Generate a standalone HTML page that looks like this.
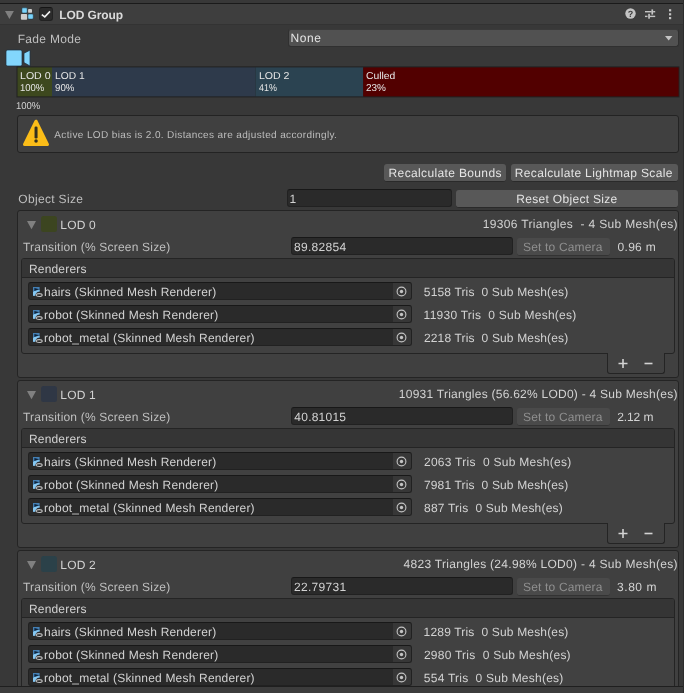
<!DOCTYPE html>
<html><head><meta charset="utf-8"><title>LOD Group</title>
<style>
html,body{margin:0;padding:0;background:#383838;}
body{width:684px;height:693px;overflow:hidden;position:relative;font-family:"Liberation Sans",sans-serif;}
#w{position:absolute;left:0;top:0;width:684px;height:693px;overflow:hidden;will-change:transform;text-rendering:geometricPrecision;}
.t{position:absolute;white-space:pre;line-height:16px;}
.b{position:absolute;box-sizing:border-box;}
svg{position:absolute;overflow:visible;}
</style></head><body><div id="w">

<div class="b" style="left:0px;top:3px;width:684px;height:1px;background:#1a1a1a;"></div>
<div class="b" style="left:0px;top:4px;width:684px;height:20px;background:#3e3e3e;"></div>
<div class="b" style="left:0px;top:24px;width:684px;height:1px;background:#333333;"></div>
<svg style="left:5px;top:10.9px" width="10" height="9"><polygon points="0,0 8.9,0 4.4,8.1" fill="#808080"/></svg>
<svg style="left:20px;top:7px" width="14" height="14"><rect x="1.9" y="0.85" width="5.3" height="5.15" rx="1" fill="#7ad3fa" stroke="#1d3444" stroke-width="0.5"/><rect x="8.1" y="1.9" width="3.9" height="3.9" rx="0.9" fill="#cdcdcd"/><rect x="0.9" y="7" width="6.3" height="5.8" rx="1" fill="#cdcdcd"/><rect x="7.95" y="7" width="5.3" height="5.1" rx="1" fill="#7ad3fa" stroke="#1d3444" stroke-width="0.5"/></svg>
<div class="b" style="left:39px;top:7px;width:14px;height:14px;background:#2b2b2b;border:1px solid #222;border-top-color:#151515;border-radius:3px;"></div>
<svg style="left:36px;top:2px" width="20" height="20"><polyline points="5.8,12.6 8.8,14.9 14,9.4" fill="none" stroke="#efefef" stroke-width="1.6"/></svg>
<div class="t" style="left:59.36px;top:7px;font-size:12px;color:#dadada;letter-spacing:-0.13px;font-weight:bold;">LOD Group</div>
<svg style="left:624.5px;top:8.3px" width="11" height="11"><circle cx="5.5" cy="5.5" r="5.2" fill="#c4c4c4"/><text x="5.5" y="8.8" font-size="9" font-weight="bold" text-anchor="middle" fill="#3e3e3e" font-family="Liberation Sans, sans-serif">?</text></svg>
<svg style="left:645px;top:9px" width="11" height="10"><g fill="#c4c4c4"><rect x="0" y="2" width="6.6" height="1.4"/><rect x="6.4" y="0.4" width="1.7" height="5.2"/><rect x="8.1" y="2" width="2.1" height="1.4"/><rect x="0" y="6.7" width="2.5" height="1.4"/><rect x="3.2" y="4.8" width="1.7" height="4.9"/><rect x="4.9" y="6.7" width="5.3" height="1.4"/></g></svg>
<svg style="left:669px;top:9px" width="3" height="11"><g fill="#c4c4c4"><rect x="0" y="0.2" width="2.2" height="2.2"/><rect x="0" y="4.2" width="2.2" height="2.2"/><rect x="0" y="8" width="2.2" height="2.2"/></g></svg>
<div class="t" style="left:17.70px;top:31px;font-size:12px;color:#bfbfbf;letter-spacing:0.325px;">Fade Mode</div>
<div class="b" style="left:288px;top:29px;width:391px;height:18px;background:#515151;border:1px solid #303030;border-top-color:#3a3a3a;border-radius:3px;"></div>
<div class="t" style="left:290.50px;top:30px;font-size:12px;color:#e4e4e4;letter-spacing:0.599px;">None</div>
<svg style="left:665.4px;top:36px" width="8" height="5"><polygon points="0,0 7.4,0 3.7,4.5" fill="#c4c4c4"/></svg>
<svg style="left:6px;top:50px" width="25" height="16"><rect x="0" y="0" width="16" height="16" rx="1.7" fill="#82d6fc" stroke="#1e3242" stroke-width="0.7"/><polygon points="18,3.2 24,0.2 24,16 18,12.6" fill="#82d6fc" stroke="#1e3242" stroke-width="0.7"/></svg>
<svg style="left:0;top:0" width="684" height="110"><rect x="16.5" y="66.4" width="663" height="31" fill="#212121"/><rect x="17.5" y="67.4" width="34.5" height="29" fill="#3d481e"/><rect x="52" y="67.4" width="203.5" height="29" fill="#2e3a4b"/><rect x="255.5" y="67.4" width="107.7" height="29" fill="#2b4351"/><rect x="363.2" y="67.4" width="315.4" height="29" fill="#520000"/></svg>
<div class="t" style="left:20.00px;top:69px;font-size:10px;color:#e6e6e6;transform:scaleX(1.0585);transform-origin:0 0;">LOD 0</div>
<div class="t" style="left:20.13px;top:81px;font-size:10px;color:#e6e6e6;transform:scaleX(0.9492);transform-origin:0 0;">100%</div>
<div class="t" style="left:54.92px;top:69px;font-size:10px;color:#e6e6e6;transform:scaleX(1.0241);transform-origin:0 0;">LOD 1</div>
<div class="t" style="left:55.28px;top:81px;font-size:10px;color:#e6e6e6;transform:scaleX(0.9673);transform-origin:0 0;">90%</div>
<div class="t" style="left:258.70px;top:69px;font-size:10px;color:#e6e6e6;transform:scaleX(1.055);transform-origin:0 0;">LOD 2</div>
<div class="t" style="left:259.33px;top:81px;font-size:10px;color:#e6e6e6;transform:scaleX(0.8937);transform-origin:0 0;">41%</div>
<div class="t" style="left:365.93px;top:69px;font-size:10px;color:#e6e6e6;transform:scaleX(1.0358);transform-origin:0 0;">Culled</div>
<div class="t" style="left:365.95px;top:81px;font-size:10px;color:#e6e6e6;transform:scaleX(0.9995);transform-origin:0 0;">23%</div>
<div class="t" style="left:16.33px;top:99px;font-size:10px;color:#d2d2d2;transform:scaleX(0.9492);transform-origin:0 0;">100%</div>
<div class="b" style="left:17px;top:115px;width:662px;height:38px;background:#404040;border:1px solid #232323;border-radius:3px;"></div>
<svg style="left:22px;top:118px" width="28" height="29"><path d="M14 3.4 L25.3 26.4 H2.7 Z" fill="#fbbd18" stroke="#fbbd18" stroke-width="3.4" stroke-linejoin="round"/><rect x="12.55" y="8.4" width="3" height="12.2" rx="1.4" fill="#33301f"/><circle cx="14.05" cy="23" r="1.75" fill="#33301f"/></svg>
<div class="t" style="left:54.27px;top:128px;font-size:10px;color:#bdbdbd;letter-spacing:0.372px;">Active LOD bias is 2.0. Distances are adjusted accordingly.</div>
<div class="b" style="left:384px;top:164px;width:122.4px;height:18px;background:#585858;border-bottom:1px solid #2a2a2a;border-radius:3px;"></div>
<div class="t" style="left:388.60px;top:165px;font-size:12px;color:#e4e4e4;letter-spacing:0.358px;">Recalculate Bounds</div>
<div class="b" style="left:511.3px;top:164px;width:167px;height:18px;background:#585858;border-bottom:1px solid #2a2a2a;border-radius:3px;"></div>
<div class="t" style="left:514.80px;top:165px;font-size:12px;color:#e4e4e4;letter-spacing:0.356px;">Recalculate Lightmap Scale</div>
<div class="t" style="left:18.22px;top:191px;font-size:12px;color:#bfbfbf;letter-spacing:0.334px;">Object Size</div>
<div class="b" style="left:287px;top:189px;width:165px;height:18px;background:#2a2a2a;border:1px solid #212121;border-top-color:#181818;border-radius:3px;"></div>
<div class="t" style="left:289.42px;top:191px;font-size:12px;color:#d2d2d2;">1</div>
<div class="b" style="left:456px;top:190px;width:222.3px;height:18px;background:#585858;border-bottom:1px solid #2a2a2a;border-radius:3px;"></div>
<div class="t" style="left:516.30px;top:191px;font-size:12px;color:#e4e4e4;letter-spacing:0.306px;">Reset Object Size</div>
<div class="b" style="left:17px;top:210px;width:662px;height:168px;background:#404040;border:1px solid #242424;border-radius:3px;"></div>
<svg style="left:27px;top:221px" width="10" height="9"><polygon points="0,0 9,0 4.5,8.2" fill="#808080"/></svg>
<div class="b" style="left:41px;top:216px;width:16px;height:16px;background:#3c4520;border-radius:2.5px;"></div>
<div class="t" style="left:60.30px;top:217px;font-size:12px;color:#d2d2d2;letter-spacing:0.173px;">LOD 0</div>
<div class="t" style="left:482.87px;top:216px;font-size:12px;color:#d2d2d2;letter-spacing:0.33px;">19306 Triangles  - 4 Sub Mesh(es)</div>
<div class="t" style="left:23.02px;top:239px;font-size:12px;color:#bfbfbf;letter-spacing:0.198px;">Transition (% Screen Size)</div>
<div class="b" style="left:291px;top:237px;width:222px;height:18px;background:#2a2a2a;border:1px solid #212121;border-top-color:#181818;border-radius:3px;"></div>
<div class="t" style="left:294.03px;top:239px;font-size:12px;color:#d2d2d2;letter-spacing:0.286px;">89.82854</div>
<div class="b" style="left:517px;top:238px;width:93px;height:18px;background:#4a4a4a;border-bottom:1px solid #333;border-radius:3px;"></div>
<div class="t" style="left:522.99px;top:239px;font-size:12px;color:#8f8f8f;letter-spacing:0.175px;">Set to Camera</div>
<div class="t" style="left:617.60px;top:239px;font-size:12px;color:#d2d2d2;letter-spacing:0.281px;">0.96 m</div>
<div class="b" style="left:21px;top:258px;width:654px;height:96px;background:#414141;border:1px solid #242424;border-radius:3px;"></div>
<div class="b" style="left:22px;top:259px;width:652px;height:18px;background:#353535;border-radius:2px 2px 0 0;"></div>
<div class="b" style="left:22px;top:277px;width:652px;height:1px;background:#242424;"></div>
<div class="t" style="left:28.90px;top:261px;font-size:12px;color:#d2d2d2;letter-spacing:0.199px;">Renderers</div>
<div class="b" style="left:28px;top:282px;width:384px;height:18px;background:#2a2a2a;border:1px solid #212121;border-top-color:#181818;border-radius:3px;"></div>
<div class="b" style="left:393px;top:283px;width:18px;height:16px;background:#373737;border-radius:0 2px 2px 0;"></div>
<svg style="left:396px;top:285.5px" width="11" height="11"><circle cx="5.5" cy="5.5" r="4.4" fill="none" stroke="#c4c4c4" stroke-width="1.1"/><circle cx="5.5" cy="5.5" r="1.7" fill="#c4c4c4"/></svg>
<svg style="left:32.6px;top:287.2px" width="10" height="10"><path d="M0 0 H6.6 V4.4 C4 4.5 2.3 6 2.1 8.8 H0 Z" fill="#447fb3"/><path d="M0 8.8 V5 C1.2 3.6 3.4 2.9 6.6 2.9 V4.4 C4 4.5 2.3 6 2.1 8.8 Z" fill="#86c8f2"/><path d="M1.4 0.9 L6.1 2.2 L1.4 3.9 Z" fill="#0e2238"/><ellipse cx="6.15" cy="8.1" rx="3.05" ry="1.45" fill="#262626" stroke="#bcbcbc" stroke-width="1.1"/></svg>
<div class="t" style="left:44.03px;top:284px;font-size:12px;color:#d2d2d2;letter-spacing:0.195px;">hairs (Skinned Mesh Renderer)</div>
<div class="t" style="left:423.86px;top:284px;font-size:12px;color:#d2d2d2;letter-spacing:0.152px;">5158 Tris  0 Sub Mesh(es)</div>
<div class="b" style="left:28px;top:305px;width:384px;height:18px;background:#2a2a2a;border:1px solid #212121;border-top-color:#181818;border-radius:3px;"></div>
<div class="b" style="left:393px;top:306px;width:18px;height:16px;background:#373737;border-radius:0 2px 2px 0;"></div>
<svg style="left:396px;top:308.5px" width="11" height="11"><circle cx="5.5" cy="5.5" r="4.4" fill="none" stroke="#c4c4c4" stroke-width="1.1"/><circle cx="5.5" cy="5.5" r="1.7" fill="#c4c4c4"/></svg>
<svg style="left:32.6px;top:310.2px" width="10" height="10"><path d="M0 0 H6.6 V4.4 C4 4.5 2.3 6 2.1 8.8 H0 Z" fill="#447fb3"/><path d="M0 8.8 V5 C1.2 3.6 3.4 2.9 6.6 2.9 V4.4 C4 4.5 2.3 6 2.1 8.8 Z" fill="#86c8f2"/><path d="M1.4 0.9 L6.1 2.2 L1.4 3.9 Z" fill="#0e2238"/><ellipse cx="6.15" cy="8.1" rx="3.05" ry="1.45" fill="#262626" stroke="#bcbcbc" stroke-width="1.1"/></svg>
<div class="t" style="left:44.04px;top:307px;font-size:12px;color:#d2d2d2;letter-spacing:0.221px;">robot (Skinned Mesh Renderer)</div>
<div class="t" style="left:423.62px;top:307px;font-size:12px;color:#d2d2d2;letter-spacing:0.244px;">11930 Tris  0 Sub Mesh(es)</div>
<div class="b" style="left:28px;top:328px;width:384px;height:18px;background:#2a2a2a;border:1px solid #212121;border-top-color:#181818;border-radius:3px;"></div>
<div class="b" style="left:393px;top:329px;width:18px;height:16px;background:#373737;border-radius:0 2px 2px 0;"></div>
<svg style="left:396px;top:331.5px" width="11" height="11"><circle cx="5.5" cy="5.5" r="4.4" fill="none" stroke="#c4c4c4" stroke-width="1.1"/><circle cx="5.5" cy="5.5" r="1.7" fill="#c4c4c4"/></svg>
<svg style="left:32.6px;top:333.2px" width="10" height="10"><path d="M0 0 H6.6 V4.4 C4 4.5 2.3 6 2.1 8.8 H0 Z" fill="#447fb3"/><path d="M0 8.8 V5 C1.2 3.6 3.4 2.9 6.6 2.9 V4.4 C4 4.5 2.3 6 2.1 8.8 Z" fill="#86c8f2"/><path d="M1.4 0.9 L6.1 2.2 L1.4 3.9 Z" fill="#0e2238"/><ellipse cx="6.15" cy="8.1" rx="3.05" ry="1.45" fill="#262626" stroke="#bcbcbc" stroke-width="1.1"/></svg>
<div class="t" style="left:44.04px;top:330px;font-size:12px;color:#d2d2d2;letter-spacing:0.189px;">robot_metal (Skinned Mesh Renderer)</div>
<div class="t" style="left:423.94px;top:330px;font-size:12px;color:#d2d2d2;letter-spacing:0.148px;">2218 Tris  0 Sub Mesh(es)</div>
<div class="b" style="left:607px;top:353px;width:58px;height:21px;background:#414141;border:1px solid #242424;border-top:none;border-radius:0 0 3px 3px;"></div>
<svg style="left:618px;top:358px" width="40" height="12"><path d="M0.5 5.5H9.5M5 1V10" stroke="#d2d2d2" stroke-width="1.6" fill="none"/><path d="M26.5 5.5H34.5" stroke="#d2d2d2" stroke-width="1.6" fill="none"/></svg>
<div class="b" style="left:17px;top:380px;width:662px;height:168px;background:#404040;border:1px solid #242424;border-radius:3px;"></div>
<svg style="left:27px;top:391px" width="10" height="9"><polygon points="0,0 9,0 4.5,8.2" fill="#808080"/></svg>
<div class="b" style="left:41px;top:386px;width:16px;height:16px;background:#2f3745;border-radius:2.5px;"></div>
<div class="t" style="left:60.30px;top:387px;font-size:12px;color:#d2d2d2;letter-spacing:0.191px;">LOD 1</div>
<div class="t" style="left:398.82px;top:386px;font-size:12px;color:#d2d2d2;letter-spacing:0.247px;">10931 Triangles (56.62% LOD0) - 4 Sub Mesh(es)</div>
<div class="t" style="left:23.02px;top:409px;font-size:12px;color:#bfbfbf;letter-spacing:0.198px;">Transition (% Screen Size)</div>
<div class="b" style="left:291px;top:407px;width:222px;height:18px;background:#2a2a2a;border:1px solid #212121;border-top-color:#181818;border-radius:3px;"></div>
<div class="t" style="left:294.34px;top:409px;font-size:12px;color:#d2d2d2;letter-spacing:0.229px;">40.81015</div>
<div class="b" style="left:517px;top:408px;width:93px;height:18px;background:#4a4a4a;border-bottom:1px solid #333;border-radius:3px;"></div>
<div class="t" style="left:522.99px;top:409px;font-size:12px;color:#8f8f8f;letter-spacing:0.175px;">Set to Camera</div>
<div class="t" style="left:617.24px;top:409px;font-size:12px;color:#d2d2d2;letter-spacing:-0.108px;">2.12 m</div>
<div class="b" style="left:21px;top:428px;width:654px;height:96px;background:#414141;border:1px solid #242424;border-radius:3px;"></div>
<div class="b" style="left:22px;top:429px;width:652px;height:18px;background:#353535;border-radius:2px 2px 0 0;"></div>
<div class="b" style="left:22px;top:447px;width:652px;height:1px;background:#242424;"></div>
<div class="t" style="left:28.90px;top:431px;font-size:12px;color:#d2d2d2;letter-spacing:0.199px;">Renderers</div>
<div class="b" style="left:28px;top:452px;width:384px;height:18px;background:#2a2a2a;border:1px solid #212121;border-top-color:#181818;border-radius:3px;"></div>
<div class="b" style="left:393px;top:453px;width:18px;height:16px;background:#373737;border-radius:0 2px 2px 0;"></div>
<svg style="left:396px;top:455.5px" width="11" height="11"><circle cx="5.5" cy="5.5" r="4.4" fill="none" stroke="#c4c4c4" stroke-width="1.1"/><circle cx="5.5" cy="5.5" r="1.7" fill="#c4c4c4"/></svg>
<svg style="left:32.6px;top:457.2px" width="10" height="10"><path d="M0 0 H6.6 V4.4 C4 4.5 2.3 6 2.1 8.8 H0 Z" fill="#447fb3"/><path d="M0 8.8 V5 C1.2 3.6 3.4 2.9 6.6 2.9 V4.4 C4 4.5 2.3 6 2.1 8.8 Z" fill="#86c8f2"/><path d="M1.4 0.9 L6.1 2.2 L1.4 3.9 Z" fill="#0e2238"/><ellipse cx="6.15" cy="8.1" rx="3.05" ry="1.45" fill="#262626" stroke="#bcbcbc" stroke-width="1.1"/></svg>
<div class="t" style="left:44.03px;top:454px;font-size:12px;color:#d2d2d2;letter-spacing:0.195px;">hairs (Skinned Mesh Renderer)</div>
<div class="t" style="left:423.94px;top:454px;font-size:12px;color:#d2d2d2;letter-spacing:0.273px;">2063 Tris  0 Sub Mesh(es)</div>
<div class="b" style="left:28px;top:475px;width:384px;height:18px;background:#2a2a2a;border:1px solid #212121;border-top-color:#181818;border-radius:3px;"></div>
<div class="b" style="left:393px;top:476px;width:18px;height:16px;background:#373737;border-radius:0 2px 2px 0;"></div>
<svg style="left:396px;top:478.5px" width="11" height="11"><circle cx="5.5" cy="5.5" r="4.4" fill="none" stroke="#c4c4c4" stroke-width="1.1"/><circle cx="5.5" cy="5.5" r="1.7" fill="#c4c4c4"/></svg>
<svg style="left:32.6px;top:480.2px" width="10" height="10"><path d="M0 0 H6.6 V4.4 C4 4.5 2.3 6 2.1 8.8 H0 Z" fill="#447fb3"/><path d="M0 8.8 V5 C1.2 3.6 3.4 2.9 6.6 2.9 V4.4 C4 4.5 2.3 6 2.1 8.8 Z" fill="#86c8f2"/><path d="M1.4 0.9 L6.1 2.2 L1.4 3.9 Z" fill="#0e2238"/><ellipse cx="6.15" cy="8.1" rx="3.05" ry="1.45" fill="#262626" stroke="#bcbcbc" stroke-width="1.1"/></svg>
<div class="t" style="left:44.04px;top:477px;font-size:12px;color:#d2d2d2;letter-spacing:0.221px;">robot (Skinned Mesh Renderer)</div>
<div class="t" style="left:423.95px;top:477px;font-size:12px;color:#d2d2d2;letter-spacing:0.148px;">7981 Tris  0 Sub Mesh(es)</div>
<div class="b" style="left:28px;top:498px;width:384px;height:18px;background:#2a2a2a;border:1px solid #212121;border-top-color:#181818;border-radius:3px;"></div>
<div class="b" style="left:393px;top:499px;width:18px;height:16px;background:#373737;border-radius:0 2px 2px 0;"></div>
<svg style="left:396px;top:501.5px" width="11" height="11"><circle cx="5.5" cy="5.5" r="4.4" fill="none" stroke="#c4c4c4" stroke-width="1.1"/><circle cx="5.5" cy="5.5" r="1.7" fill="#c4c4c4"/></svg>
<svg style="left:32.6px;top:503.2px" width="10" height="10"><path d="M0 0 H6.6 V4.4 C4 4.5 2.3 6 2.1 8.8 H0 Z" fill="#447fb3"/><path d="M0 8.8 V5 C1.2 3.6 3.4 2.9 6.6 2.9 V4.4 C4 4.5 2.3 6 2.1 8.8 Z" fill="#86c8f2"/><path d="M1.4 0.9 L6.1 2.2 L1.4 3.9 Z" fill="#0e2238"/><ellipse cx="6.15" cy="8.1" rx="3.05" ry="1.45" fill="#262626" stroke="#bcbcbc" stroke-width="1.1"/></svg>
<div class="t" style="left:44.04px;top:500px;font-size:12px;color:#d2d2d2;letter-spacing:0.189px;">robot_metal (Skinned Mesh Renderer)</div>
<div class="t" style="left:424.03px;top:500px;font-size:12px;color:#d2d2d2;letter-spacing:0.204px;">887 Tris  0 Sub Mesh(es)</div>
<div class="b" style="left:607px;top:523px;width:58px;height:21px;background:#414141;border:1px solid #242424;border-top:none;border-radius:0 0 3px 3px;"></div>
<svg style="left:618px;top:528px" width="40" height="12"><path d="M0.5 5.5H9.5M5 1V10" stroke="#d2d2d2" stroke-width="1.6" fill="none"/><path d="M26.5 5.5H34.5" stroke="#d2d2d2" stroke-width="1.6" fill="none"/></svg>
<div class="b" style="left:17px;top:550px;width:662px;height:168px;background:#404040;border:1px solid #242424;border-radius:3px;"></div>
<svg style="left:27px;top:561px" width="10" height="9"><polygon points="0,0 9,0 4.5,8.2" fill="#808080"/></svg>
<div class="b" style="left:41px;top:556px;width:16px;height:16px;background:#2b4149;border-radius:2.5px;"></div>
<div class="t" style="left:60.30px;top:557px;font-size:12px;color:#d2d2d2;letter-spacing:0.196px;">LOD 2</div>
<div class="t" style="left:403.54px;top:556px;font-size:12px;color:#d2d2d2;letter-spacing:0.299px;">4823 Triangles (24.98% LOD0) - 4 Sub Mesh(es)</div>
<div class="t" style="left:23.02px;top:579px;font-size:12px;color:#bfbfbf;letter-spacing:0.198px;">Transition (% Screen Size)</div>
<div class="b" style="left:291px;top:577px;width:222px;height:18px;background:#2a2a2a;border:1px solid #212121;border-top-color:#181818;border-radius:3px;"></div>
<div class="t" style="left:293.94px;top:579px;font-size:12px;color:#d2d2d2;letter-spacing:0.309px;">22.79731</div>
<div class="b" style="left:517px;top:578px;width:93px;height:18px;background:#4a4a4a;border-bottom:1px solid #333;border-radius:3px;"></div>
<div class="t" style="left:522.99px;top:579px;font-size:12px;color:#8f8f8f;letter-spacing:0.175px;">Set to Camera</div>
<div class="t" style="left:617.10px;top:579px;font-size:12px;color:#d2d2d2;letter-spacing:0.519px;">3.80 m</div>
<div class="b" style="left:21px;top:598px;width:654px;height:96px;background:#414141;border:1px solid #242424;border-radius:3px;"></div>
<div class="b" style="left:22px;top:599px;width:652px;height:18px;background:#353535;border-radius:2px 2px 0 0;"></div>
<div class="b" style="left:22px;top:617px;width:652px;height:1px;background:#242424;"></div>
<div class="t" style="left:28.90px;top:601px;font-size:12px;color:#d2d2d2;letter-spacing:0.199px;">Renderers</div>
<div class="b" style="left:28px;top:622px;width:384px;height:18px;background:#2a2a2a;border:1px solid #212121;border-top-color:#181818;border-radius:3px;"></div>
<div class="b" style="left:393px;top:623px;width:18px;height:16px;background:#373737;border-radius:0 2px 2px 0;"></div>
<svg style="left:396px;top:625.5px" width="11" height="11"><circle cx="5.5" cy="5.5" r="4.4" fill="none" stroke="#c4c4c4" stroke-width="1.1"/><circle cx="5.5" cy="5.5" r="1.7" fill="#c4c4c4"/></svg>
<svg style="left:32.6px;top:627.2px" width="10" height="10"><path d="M0 0 H6.6 V4.4 C4 4.5 2.3 6 2.1 8.8 H0 Z" fill="#447fb3"/><path d="M0 8.8 V5 C1.2 3.6 3.4 2.9 6.6 2.9 V4.4 C4 4.5 2.3 6 2.1 8.8 Z" fill="#86c8f2"/><path d="M1.4 0.9 L6.1 2.2 L1.4 3.9 Z" fill="#0e2238"/><ellipse cx="6.15" cy="8.1" rx="3.05" ry="1.45" fill="#262626" stroke="#bcbcbc" stroke-width="1.1"/></svg>
<div class="t" style="left:44.03px;top:624px;font-size:12px;color:#d2d2d2;letter-spacing:0.195px;">hairs (Skinned Mesh Renderer)</div>
<div class="t" style="left:423.62px;top:624px;font-size:12px;color:#d2d2d2;letter-spacing:0.166px;">1289 Tris  0 Sub Mesh(es)</div>
<div class="b" style="left:28px;top:645px;width:384px;height:18px;background:#2a2a2a;border:1px solid #212121;border-top-color:#181818;border-radius:3px;"></div>
<div class="b" style="left:393px;top:646px;width:18px;height:16px;background:#373737;border-radius:0 2px 2px 0;"></div>
<svg style="left:396px;top:648.5px" width="11" height="11"><circle cx="5.5" cy="5.5" r="4.4" fill="none" stroke="#c4c4c4" stroke-width="1.1"/><circle cx="5.5" cy="5.5" r="1.7" fill="#c4c4c4"/></svg>
<svg style="left:32.6px;top:650.2px" width="10" height="10"><path d="M0 0 H6.6 V4.4 C4 4.5 2.3 6 2.1 8.8 H0 Z" fill="#447fb3"/><path d="M0 8.8 V5 C1.2 3.6 3.4 2.9 6.6 2.9 V4.4 C4 4.5 2.3 6 2.1 8.8 Z" fill="#86c8f2"/><path d="M1.4 0.9 L6.1 2.2 L1.4 3.9 Z" fill="#0e2238"/><ellipse cx="6.15" cy="8.1" rx="3.05" ry="1.45" fill="#262626" stroke="#bcbcbc" stroke-width="1.1"/></svg>
<div class="t" style="left:44.04px;top:647px;font-size:12px;color:#d2d2d2;letter-spacing:0.221px;">robot (Skinned Mesh Renderer)</div>
<div class="t" style="left:423.94px;top:647px;font-size:12px;color:#d2d2d2;letter-spacing:0.248px;">2980 Tris  0 Sub Mesh(es)</div>
<div class="b" style="left:28px;top:668px;width:384px;height:18px;background:#2a2a2a;border:1px solid #212121;border-top-color:#181818;border-radius:3px;"></div>
<div class="b" style="left:393px;top:669px;width:18px;height:16px;background:#373737;border-radius:0 2px 2px 0;"></div>
<svg style="left:396px;top:671.5px" width="11" height="11"><circle cx="5.5" cy="5.5" r="4.4" fill="none" stroke="#c4c4c4" stroke-width="1.1"/><circle cx="5.5" cy="5.5" r="1.7" fill="#c4c4c4"/></svg>
<svg style="left:32.6px;top:673.2px" width="10" height="10"><path d="M0 0 H6.6 V4.4 C4 4.5 2.3 6 2.1 8.8 H0 Z" fill="#447fb3"/><path d="M0 8.8 V5 C1.2 3.6 3.4 2.9 6.6 2.9 V4.4 C4 4.5 2.3 6 2.1 8.8 Z" fill="#86c8f2"/><path d="M1.4 0.9 L6.1 2.2 L1.4 3.9 Z" fill="#0e2238"/><ellipse cx="6.15" cy="8.1" rx="3.05" ry="1.45" fill="#262626" stroke="#bcbcbc" stroke-width="1.1"/></svg>
<div class="t" style="left:44.04px;top:670px;font-size:12px;color:#d2d2d2;letter-spacing:0.189px;">robot_metal (Skinned Mesh Renderer)</div>
<div class="t" style="left:423.86px;top:670px;font-size:12px;color:#d2d2d2;letter-spacing:0.233px;">554 Tris  0 Sub Mesh(es)</div>
<div class="b" style="left:607px;top:693px;width:58px;height:21px;background:#414141;border:1px solid #242424;border-top:none;border-radius:0 0 3px 3px;"></div>
<svg style="left:618px;top:698px" width="40" height="12"><path d="M0.5 5.5H9.5M5 1V10" stroke="#d2d2d2" stroke-width="1.6" fill="none"/><path d="M26.5 5.5H34.5" stroke="#d2d2d2" stroke-width="1.6" fill="none"/></svg>
<div class="b" style="left:0px;top:686px;width:684px;height:1px;background:#1f1f1f;"></div>
<div class="b" style="left:0px;top:687px;width:684px;height:6px;background:#3c3c3c;"></div>
<div class="b" style="left:683px;top:0px;width:1px;height:693px;background:#2c2c2c;"></div>
</div></body></html>
